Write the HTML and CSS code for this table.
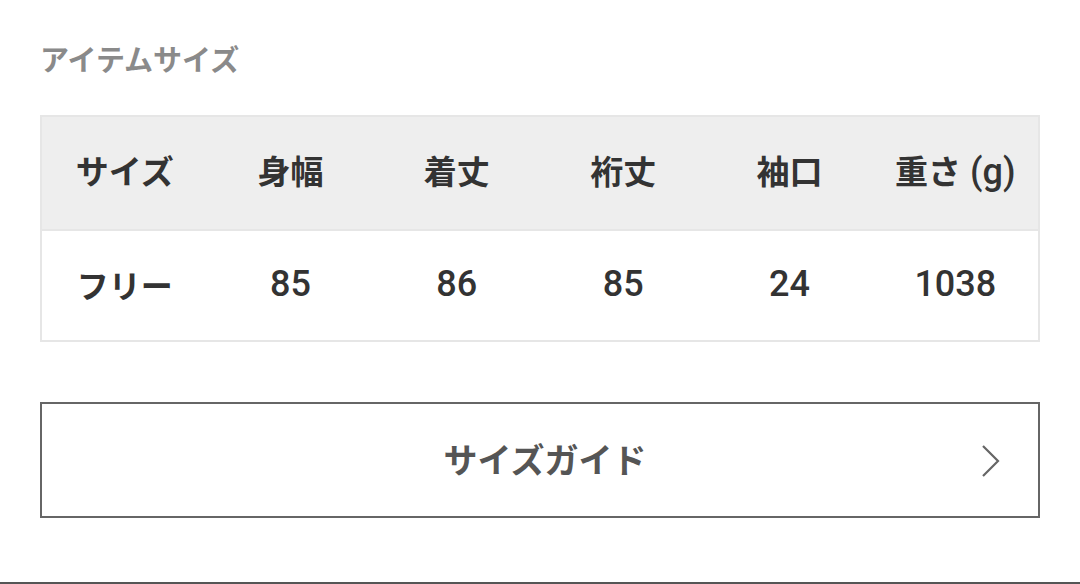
FILE: index.html
```html
<!DOCTYPE html>
<html lang="ja">
<head>
<meta charset="utf-8">
<link rel="stylesheet" href="styles.css">
</head>
<body>
<div class="page">
  <h2 class="title">アイテムサイズ</h2>
  <table class="size-table">
    <thead>
      <tr>
        <th>サイズ</th><th>身幅</th><th>着丈</th><th>裄丈</th><th>袖口</th><th>重さ<span class="unit"> (g)</span></th>
      </tr>
    </thead>
    <tbody>
      <tr>
        <td>フリー</td><td class="num">85</td><td class="num">86</td><td class="num">85</td><td class="num">24</td><td class="num">1038</td>
      </tr>
    </tbody>
  </table>
  <a class="guide-btn" href="#">
    <span class="guide-label">サイズガイド</span>
    <svg class="chevron" width="22" height="36" viewBox="0 0 22 36"><path d="M3 3 L18 18 L3 33" fill="none" stroke="#666" stroke-width="2.2"/></svg>
  </a>
</div>
<div class="bottom-line"></div>
</body>
</html>
```

FILE: styles.css
```css
html, body {
  margin: 0;
  padding: 0;
  background: #fff;
}
body {
  font-family: "Noto Sans CJK JP", "Noto Sans", sans-serif;
  height: 584px;
  display: flex;
  flex-direction: column;
  overflow: hidden;
}
.page {
  flex: 1;
  padding: 38px 40px 0;
}
.title {
  margin: 0;
  font-size: 29px;
  line-height: 40px;
  font-weight: 700;
  color: #8a8a8a;
}
.size-table {
  margin-top: 37px;
  width: 1000px;
  border-collapse: collapse;
  border: 2px solid #e6e6e6;
  table-layout: fixed;
}
.size-table th,
.size-table td {
  text-align: center;
  color: #333;
  font-weight: 700;
  padding: 0;
  box-sizing: border-box;
}
.size-table th {
  background: #eeeeee;
  height: 114px;
  font-size: 33px;
  padding-bottom: 6px;
  border-bottom: 2px solid #e6e6e6;
}
.size-table th .unit {
  font-family: Roboto, "Liberation Sans", sans-serif;
  font-weight: 500;
  font-size: 36px;
}
.size-table td {
  background: #fff;
  height: 111px;
  font-size: 32px;
  padding-bottom: 4px;
}
.size-table td.num {
  font-family: Roboto, "Liberation Sans", sans-serif;
  font-weight: 500;
  font-size: 36px;
}
.guide-btn {
  margin-top: 60px;
  height: 112px;
  border: 2px solid #666;
  display: flex;
  align-items: center;
  justify-content: center;
  position: relative;
  text-decoration: none;
}
.guide-label {
  font-size: 34px;
  font-weight: 700;
  color: #555;
  margin-bottom: 4px;
  padding-left: 10px;
}
.chevron {
  position: absolute;
  right: 36px;
  top: 39px;
}
.bottom-line {
  height: 2px;
  background: #555;
}
```
